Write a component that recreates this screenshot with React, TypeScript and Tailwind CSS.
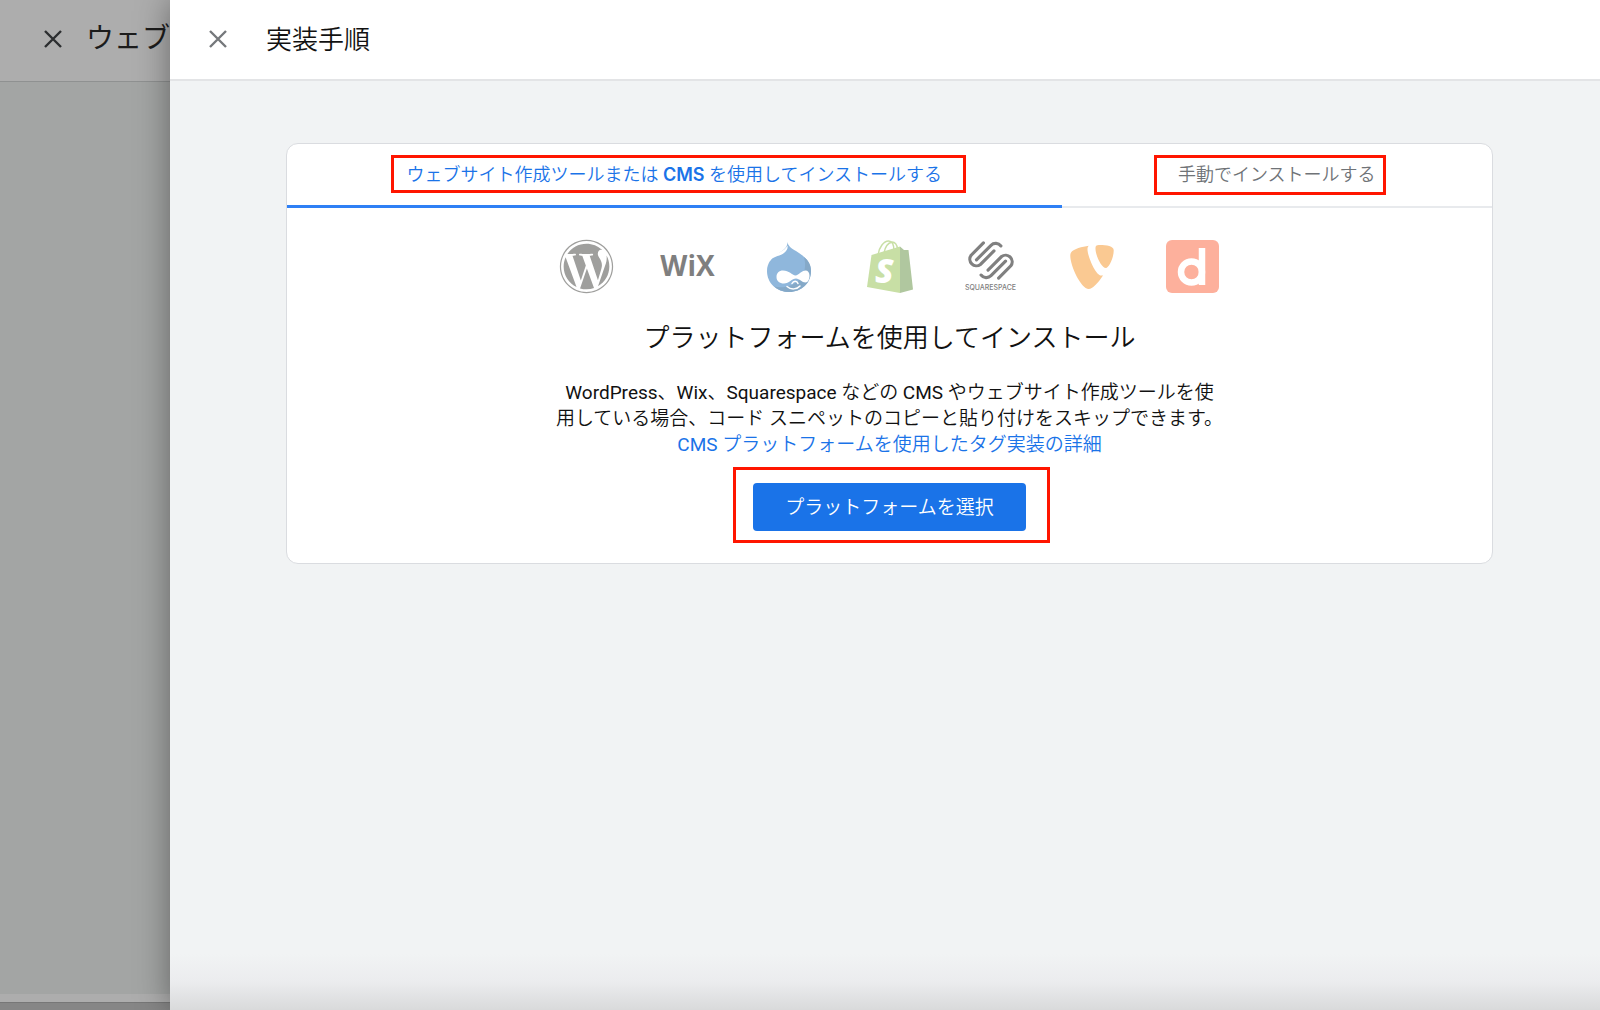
import type { ReactNode } from 'react';
import { FaWordpress } from 'react-icons/fa';
import { SiTypo3 } from 'react-icons/si';

const CloseIcon = ({ className }: { className: string }) => (
    <svg viewBox="0 0 18 18" className={`size-[18px] ${className}`} fill="none" stroke="currentColor" strokeWidth="2.4">
        <path d="M1 1l16 16M17 1L1 17" />
    </svg>
);

const DrupalLogo = () => (
    <svg viewBox="0 0 44 50" className="h-[50px] w-11">
        <path
            d="M20.5 0c.6 4 3.500 6 8.500 9C38 14.500 44 20.500 44 29c0 12-9.500 21-22 21S0 41 0 29C0 20 6 14.500 12 11c5-3 8.500-6 8.500-11z"
            fill="#8fb7dc"
        />
        <path d="M37 15c5 4 7 8.500 7 14 0 12-9.500 21-22 21-6 0-11-2-15-5.500 17 4 36-8 30-29.500z" fill="#85a9c8" />
        <path d="M3 19c0-4 5-6.500 9-8.500 4-2 7-4 8.500-7 .5 3-.5 5-3.500 7.500C13 14.500 6 14 3 19z" fill="#fff" />
        <path
            d="M16 28.500c6 0 9 4.500 12.500 5 3.500-.5 6-5 10-5 2.500 0 4 2 4 5 0 4-1.500 7-4 7-3.500 0-6-4-9.500-4-4 0-7 5-12 5-4.500 0-7.500-2.500-7.500-6.500s2.500-6.500 6.500-6.500z"
            fill="#fff"
        />
        <path d="M25 41.500c1.500-3 5-3 6 0M20 44.500c4 3.500 10 3 13-.5" fill="none" stroke="#fff" strokeWidth="1.500" strokeLinecap="round" />
    </svg>
);

const ShopifyLogo = () => (
    <svg viewBox="0 0 46 53" className="h-[53px] w-[46px]">
        <path d="M11 15C12 7 17 1 21.500 1c4 0 5.500 5 5.500 10M17 13c1-6 4-10 8-11 3 0 5 3 5.500 7" fill="none" stroke="#c8dfa5" strokeWidth="1.500" />
        <path d="M4.500 15L33 6.500V53L0 47z" fill="#c8dfa5" />
        <path d="M33 6.500l4 3.500h4.500L46 49.500 33 53z" fill="#b0c79f" />
        <text x="8" y="43" fill="#fff" className="font-['Open_Sans'] text-[34px] font-extrabold italic">
            S
        </text>
    </svg>
);

const SquarespaceLogo = () => (
    <div className="flex flex-col items-center text-[#808080]">
        <svg viewBox="381 49 144 118" className="h-[39px] w-12" fill="none" stroke="currentColor" strokeWidth="9.500" strokeLinecap="round">
            <path d="M430 55L393 92a20 20 0 0 0 28 28L462 79M409 106L453 62a20 20 0 0 1 30 2" />
            <path d="M430 55L393 92a20 20 0 0 0 28 28L462 79M409 106L453 62a20 20 0 0 1 30 2" transform="rotate(180 453 108)" />
        </svg>
        <span className="mt-1 font-['Inter'] text-[7px] leading-2 font-medium">SQUARESPACE</span>
    </div>
);

const DudaLogo = () => (
    <svg viewBox="0 0 53 53" className="size-[53px]">
        <rect width="53" height="53" rx="6" fill="#fdb09c" />
        <circle cx="25.500" cy="32" r="10.500" fill="none" stroke="#fff" strokeWidth="6.500" />
        <path d="M36 8v37" stroke="#fff" strokeWidth="6.500" />
    </svg>
);

const PLATFORMS = [
    { name: 'WordPress', logo: <FaWordpress className="size-[55px] shrink-0 text-[#9f9f9d]" /> },
    { name: 'Wix', logo: <span className="pb-1 font-['Open_Sans'] text-[28px] leading-8 font-bold text-[#7f7f7f]">WiX</span> },
    { name: 'Drupal', logo: <DrupalLogo /> },
    { name: 'Shopify', logo: <ShopifyLogo /> },
    { name: 'Squarespace', logo: <SquarespaceLogo /> },
    { name: 'TYPO3', logo: <SiTypo3 className="size-11 text-[#fac992]" /> },
    { name: 'Duda', logo: <DudaLogo /> },
];

// red marker box drawn over the thing it points at
function Highlight({ className, children }: { className: string; children: ReactNode }) {
    return (
        <span className="relative inline-block">
            {children}
            <span className={`pointer-events-none absolute border-3 border-[#ff1500] ${className}`} />
        </span>
    );
}

// latin words are set a step heavier than the japanese around them
const Latin = ({ children }: { children: ReactNode }) => <span className="font-normal">{children}</span>;

function BackgroundPage() {
    return (
        <div className="flex w-[170px] shrink-0 flex-col overflow-hidden bg-[#a3a5a4]">
            <div className="flex h-[82px] shrink-0 items-center border-b border-[#8f9191] bg-[#adadad] pb-1 pl-11 whitespace-nowrap">
                <CloseIcon className="shrink-0 text-[#2c2e30]" />
                <span className="ml-6 text-[28px] leading-10 font-normal text-[#1c1c1c]">ウェブ</span>
            </div>
            <div className="flex-1" />
            <div className="h-2 bg-[#adadad]" />
            <div className="h-2 border-t border-[#777] bg-[#868686]" />
        </div>
    );
}

function InstallCard() {
    return (
        <section className="rounded-xl border border-[#dadce0] bg-white">
            <div role="tablist" className="grid h-16 grid-cols-[9fr_5fr] text-[18px] leading-6">
                <button role="tab" aria-selected="true" className="border-b-3 border-[#2f80f5] text-[#1a73e8]">
                    <Highlight className="-top-2 -right-6 -bottom-1.5 -left-4">
                        ウェブサイト作成ツールまたは <span className="font-['Inter'] font-semibold">CMS</span> を使用してインストールする
                    </Highlight>
                </button>
                <button role="tab" aria-selected="false" className="border-b-2 border-[#e8eaed] text-[#6f7377]">
                    <Highlight className="-top-2 -right-2.5 -bottom-2 -left-6">手動でインストールする</Highlight>
                </button>
            </div>
            <div className="flex flex-col items-center py-8">
                <ul className="flex gap-12">
                    {PLATFORMS.map(({ name, logo }) => (
                        <li key={name} aria-label={name} className="flex size-[53px] items-center justify-center">
                            {logo}
                        </li>
                    ))}
                </ul>
                <h2 className="mt-[25px] text-[26px] leading-10 text-[#111]">プラットフォームを使用してインストール</h2>
                <p className="mt-[22px] text-center text-[19px] leading-[26px] text-[#111]">
                    <Latin>WordPress</Latin>、<Latin>Wix</Latin>、<Latin>Squarespace</Latin> などの <Latin>CMS</Latin> やウェブサイト作成ツールを使
                    <br />
                    用している場合、コード スニペットのコピーと貼り付けをスキップできます。
                    <br />
                    <a href="#" className="text-[#1a73e8]">
                        <Latin>CMS</Latin> プラットフォームを使用したタグ実装の詳細
                    </a>
                </p>
                <div className="mt-[25px]">
                    <Highlight className="-top-4 -right-6 -bottom-3 -left-5">
                        <button className="block h-12 rounded bg-[#1a73e8] px-8 pt-0.5 text-[19px] text-white">プラットフォームを選択</button>
                    </Highlight>
                </div>
            </div>
        </section>
    );
}

export default function App() {
    return (
        <div className="flex min-h-screen bg-[#a3a5a4] font-['Roboto','Noto_Sans_CJK_JP',sans-serif] font-[350]" lang="ja">
            <BackgroundPage />
            <main className="relative flex flex-1 flex-col bg-[#f1f3f4] shadow-[0_0_32px_rgba(0,0,0,0.4)]">
                <header className="flex h-[81px] items-center border-b-2 border-[#e3e4e6] bg-white pl-[39px]">
                    <button aria-label="閉じる" className="pb-0.5 text-[#75787b]">
                        <CloseIcon className="block" />
                    </button>
                    <h1 className="ml-[39px] text-[26px] leading-10 text-[#111]">実装手順</h1>
                </header>
                <div className="flex-1 pt-[62px] pr-[107px] pl-[116px]">
                    <InstallCard />
                </div>
                <div className="h-14 bg-linear-to-b from-[#f1f3f4] via-[#ebecee] to-[#d9dadb]" />
            </main>
        </div>
    );
}
